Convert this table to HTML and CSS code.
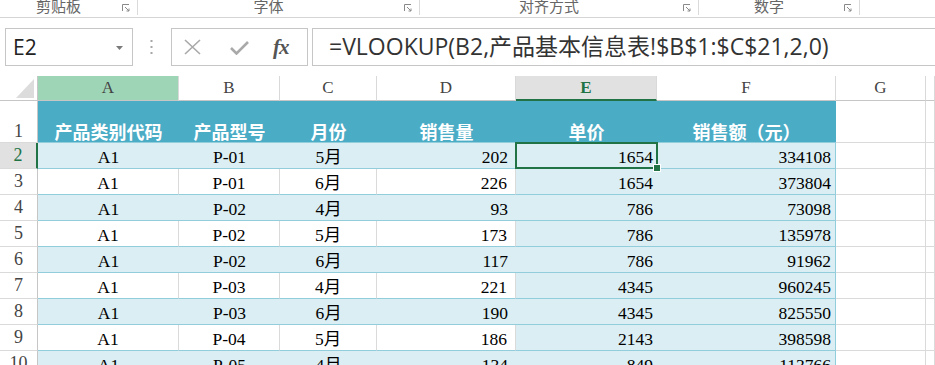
FILE: index.html
```html
<!DOCTYPE html>
<html lang="zh-CN">
<head>
<meta charset="utf-8">
<title>Excel</title>
<link rel="stylesheet" href="styles.css">
</head>
<body>
<div class="ribbon">
  <div class="grp g1"><span class="lbl">剪贴板</span><svg class="launch" width="8" height="8" viewBox="0 0 8 8"><path d="M0.5 7V0.5H7" fill="none" stroke="#8a8a8a"/><path d="M3 3L7 7M7 4.5V7H4.5" fill="none" stroke="#8a8a8a"/></svg></div>
  <div class="grp g2"><span class="lbl">字体</span><svg class="launch" width="8" height="8" viewBox="0 0 8 8"><path d="M0.5 7V0.5H7" fill="none" stroke="#8a8a8a"/><path d="M3 3L7 7M7 4.5V7H4.5" fill="none" stroke="#8a8a8a"/></svg></div>
  <div class="grp g3"><span class="lbl">对齐方式</span><svg class="launch" width="8" height="8" viewBox="0 0 8 8"><path d="M0.5 7V0.5H7" fill="none" stroke="#8a8a8a"/><path d="M3 3L7 7M7 4.5V7H4.5" fill="none" stroke="#8a8a8a"/></svg></div>
  <div class="grp g4"><span class="lbl">数字</span><svg class="launch" width="8" height="8" viewBox="0 0 8 8"><path d="M0.5 7V0.5H7" fill="none" stroke="#8a8a8a"/><path d="M3 3L7 7M7 4.5V7H4.5" fill="none" stroke="#8a8a8a"/></svg></div>
</div>

<div class="fbar">
  <div class="namebox"><span class="nbtext">E2</span><svg class="nbarrow" width="7" height="4" viewBox="0 0 7 4"><path d="M0 0H7L3.5 4Z" fill="#7a7a7a"/></svg></div>
  <svg class="dots" width="3" height="14" viewBox="0 0 3 14"><rect x="0.5" y="0" width="2" height="2" fill="#a6a6a6"/><rect x="0.5" y="6" width="2" height="2" fill="#a6a6a6"/><rect x="0.5" y="12" width="2" height="2" fill="#a6a6a6"/></svg>
  <div class="fxbox">
    <svg class="ico" width="17" height="16" viewBox="0 0 17 16"><path d="M1 1L16 15M16 1L1 15" stroke="#a9a9a9" stroke-width="1.6" fill="none"/></svg>
    <svg class="ico" width="19" height="15" viewBox="0 0 19 15"><path d="M1 8L6.5 13.5L18 2" stroke="#a9a9a9" stroke-width="2.6" fill="none"/></svg>
    <span class="fx">fx</span>
  </div>
  <div class="formula">=VLOOKUP(B2,产品基本信息表!$B$1:$C$21,2,0)</div>
</div>

<div class="sheet">
  <div class="corner"><span class="tri"></span></div>
  <div class="ch a">A</div>
  <div class="ch">B</div>
  <div class="ch">C</div>
  <div class="ch">D</div>
  <div class="ch e">E</div>
  <div class="ch">F</div>
  <div class="ch">G</div>
  <div class="ch"></div>

  <div class="rh r1">1</div>
  <div class="th">产品类别代码</div>
  <div class="th">产品型号</div>
  <div class="th">月份</div>
  <div class="th">销售量</div>
  <div class="th">单价</div>
  <div class="th">销售额（元）</div>
  <div class="g"></div>
  <div class="g"></div>

  <div class="rh sel">2</div>
  <div class="c b ctr">A1</div><div class="c b ctr">P-01</div><div class="c b ctr">5月</div><div class="c b rd">202</div><div class="c b re act">1654</div><div class="c b rf">334108</div><div class="g"></div><div class="g"></div>

  <div class="rh">3</div>
  <div class="c w ctr">A1</div><div class="c w ctr">P-01</div><div class="c w ctr">6月</div><div class="c w rd">226</div><div class="c b re">1654</div><div class="c b rf">373804</div><div class="g"></div><div class="g"></div>

  <div class="rh">4</div>
  <div class="c b ctr">A1</div><div class="c b ctr">P-02</div><div class="c b ctr">4月</div><div class="c b rd">93</div><div class="c b re">786</div><div class="c b rf">73098</div><div class="g"></div><div class="g"></div>

  <div class="rh">5</div>
  <div class="c w ctr">A1</div><div class="c w ctr">P-02</div><div class="c w ctr">5月</div><div class="c w rd">173</div><div class="c b re">786</div><div class="c b rf">135978</div><div class="g"></div><div class="g"></div>

  <div class="rh">6</div>
  <div class="c b ctr">A1</div><div class="c b ctr">P-02</div><div class="c b ctr">6月</div><div class="c b rd">117</div><div class="c b re">786</div><div class="c b rf">91962</div><div class="g"></div><div class="g"></div>

  <div class="rh">7</div>
  <div class="c w ctr">A1</div><div class="c w ctr">P-03</div><div class="c w ctr">4月</div><div class="c w rd">221</div><div class="c b re">4345</div><div class="c b rf">960245</div><div class="g"></div><div class="g"></div>

  <div class="rh">8</div>
  <div class="c b ctr">A1</div><div class="c b ctr">P-03</div><div class="c b ctr">6月</div><div class="c b rd">190</div><div class="c b re">4345</div><div class="c b rf">825550</div><div class="g"></div><div class="g"></div>

  <div class="rh">9</div>
  <div class="c w ctr">A1</div><div class="c w ctr">P-04</div><div class="c w ctr">5月</div><div class="c w rd">186</div><div class="c b re">2143</div><div class="c b rf">398598</div><div class="g"></div><div class="g"></div>

  <div class="rh">10</div>
  <div class="c b ctr">A1</div><div class="c b ctr">P-05</div><div class="c b ctr">4月</div><div class="c b rd">134</div><div class="c b re">849</div><div class="c b rf">113766</div><div class="g"></div><div class="g"></div>
</div>
</body>
</html>
```

FILE: styles.css
```css
* { box-sizing: border-box; }
html, body { margin: 0; padding: 0; background: #fff; }
body { width: 935px; height: 365px; overflow: hidden; font-family: "Liberation Serif", "Noto Sans CJK SC", serif; }

/* ribbon group labels */
.ribbon {
  display: flex;
  height: 18px;
  border-bottom: 1px solid #d5d5d5;
  overflow: hidden;
}
.grp {
  display: flex;
  align-items: flex-start;
  border-right: 1px solid #dadada;
  height: 15px;
}
.g1 { width: 138px; }
.g2 { width: 282px; }
.g3 { width: 279px; }
.g4 { width: 161px; }
.lbl {
  flex: 1;
  text-align: center;
  font-family: "Noto Sans CJK SC", sans-serif;
  font-size: 15px;
  line-height: 17px;
  color: #666;
  margin-top: -3px;
}
.launch { flex: none; margin: 4px 7px 0 5px; }

/* formula bar */
.fbar {
  display: flex;
  align-items: flex-start;
  height: 58px;
  padding-top: 10px;
}
.namebox {
  display: flex;
  align-items: center;
  width: 128px;
  height: 38px;
  margin-left: 5px;
  border: 1px solid #c6c6c6;
  padding: 0 9px 0 7px;
}
.nbtext {
  flex: 1;
  font-family: "Open Sans", "Noto Sans", sans-serif;
  font-size: 21px;
  color: #222;
}
.nbarrow { flex: none; margin-top: 1px; }
.dots { flex: none; margin: 12px 0 0 17px; }
.fxbox {
  display: flex;
  align-items: center;
  width: 137px;
  height: 38px;
  margin-left: 18px;
  border: 1px solid #c6c6c6;
  padding-left: 12px;
}
.fxbox .ico:nth-child(1) { margin-right: 29px; }
.fxbox .ico:nth-child(2) { margin-right: 24px; }
.fx {
  font-family: "Liberation Serif", serif;
  font-style: italic;
  font-weight: bold;
  font-size: 21px;
  color: #555;
  letter-spacing: -1px;
}
.formula {
  flex: 1;
  height: 38px;
  margin-left: 4px;
  border: 1px solid #c6c6c6;
  border-right: none;
  padding-left: 16px;
  font-family: "Open Sans", "Noto Sans CJK SC", sans-serif;
  font-size: 23px;
  line-height: 35px;
  color: #333;
  white-space: nowrap;
  overflow: hidden;
}

/* sheet grid */
.sheet {
  display: grid;
  grid-template-columns: 38px 141px 101px 97px 139px 141px 179px 90px 9px;
  grid-template-rows: 25px 42px repeat(9, 26px);
}
.corner {
  border-right: 1px solid #c6c6c6;
  border-bottom: 1px solid #c6c6c6;
  display: flex;
  align-items: flex-end;
  justify-content: flex-end;
  padding: 0 3px 2px 0;
}
.tri {
  width: 0; height: 0;
  border-left: 18px solid transparent;
  border-bottom: 19px solid #dcdcdc;
}
.ch {
  border-right: 1px solid #d9d9d9;
  border-bottom: 1px solid #c6c6c6;
  text-align: center;
  font-size: 17px;
  line-height: 24px;
  color: #444;
}
.ch.a { background: #9fd5b7; }
.ch.e {
  background: #e1e1e1;
  color: #217346;
  font-weight: bold;
  border-bottom: 2px solid #217346;
}
.rh {
  border-right: 1px solid #c6c6c6;
  border-bottom: 1px solid #dadada;
  text-align: center;
  font-size: 18px;
  line-height: 25px;
  color: #444;
}
.rh.r1 { line-height: 20px; padding-top: 20px; }
.rh.sel {
  background: #e1e1e1;
  color: #217346;
  border-right: 2px solid #217346;
}
.th {
  background: #4bacc6;
  color: #fff;
  font-family: "Noto Sans CJK SC", sans-serif;
  font-weight: bold;
  font-size: 18px;
  line-height: 20px;
  text-align: center;
  padding-top: 20px;
  border-bottom: 1px solid #92cddc;
}
.g {
  border-right: 1px solid #dadada;
  border-bottom: 1px solid #dadada;
}
.c {
  font-size: 17.5px;
  line-height: 20px;
  padding-top: 4px;
  color: #000;
  border-bottom: 1px solid #92cddc;
  white-space: nowrap;
}
.c.b { background: #daeef3; }
.c.w { background: #fff; border-right: 1px solid #dadada; }
.ctr { text-align: center; }
.rd { text-align: right; padding-right: 8px; }
.re { text-align: right; padding-right: 4px; }
.rf { text-align: right; padding-right: 4px; border-right: 1px solid #92cddc; }
.act { position: relative; }
.act::after {
  content: "";
  position: absolute;
  left: -1px; top: -1px; right: -1px; bottom: -1px;
  border: 2px solid #217346;
}
.act::before {
  content: "";
  position: absolute;
  right: -4px; bottom: -4px;
  width: 6px; height: 6px;
  background: #217346;
  border: 1px solid #fff;
  z-index: 2;
}
```
